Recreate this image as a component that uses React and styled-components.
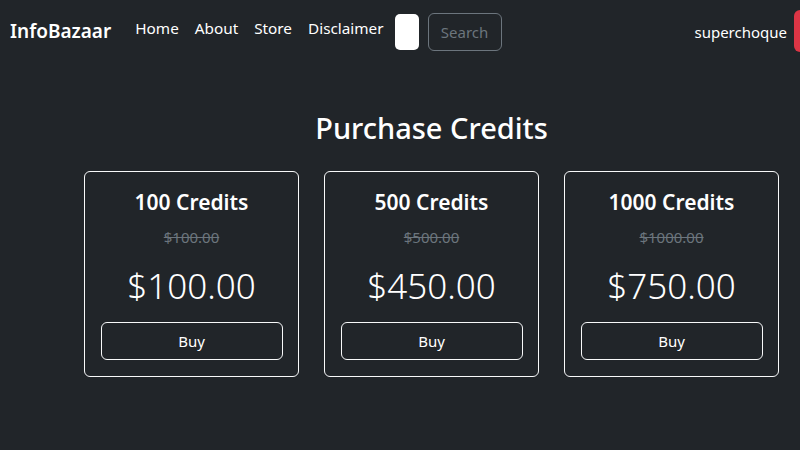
import React from 'react'
import styled, { createGlobalStyle } from 'styled-components'

const GlobalStyle = createGlobalStyle`
  html, body {
    margin: 0;
    background: #212529;
    color: #fff;
    font-family: 'Noto Sans', 'Open Sans', sans-serif;
    overflow: hidden;
  }
`

const Navbar = styled.nav`
  display: flex;
  align-items: center;
  height: 62px;
  padding: 0 0 0 10px;
  box-sizing: border-box;
`

const Brand = styled.a`
  font-size: 19px;
  font-weight: 600;
  color: #fff;
  margin-right: 16px;
  padding-bottom: 1px;
`

const NavList = styled.ul`
  display: flex;
  list-style: none;
  margin: 0 3px 6px 0;
  padding: 0;
`

const NavLink = styled.li`
  font-size: 15.3px;
  color: #fff;
  padding: 0 8px;
`

const SearchForm = styled.form`
  display: flex;
  align-items: center;
  gap: 9px;
  margin-top: 1px;
`

const BlankInput = styled.div`
  width: 24px;
  height: 36px;
  background: #fff;
  border-radius: 5px;
`

const SearchButton = styled.button`
  width: 74px;
  height: 38px;
  background: transparent;
  border: 1px solid #6c757d;
  border-radius: 6px;
  color: #6c757d;
  font-family: inherit;
  font-size: 15px;
`

const Spacer = styled.div`
  flex: 1;
`

const User = styled.span`
  font-size: 15px;
  color: #fff;
  margin-right: 7px;
  margin-top: 2px;
`

const LogoutButton = styled.div`
  width: 6px;
  height: 42px;
  background: #dc3545;
  border-radius: 6px 0 0 6px;
`

const Main = styled.main`
  width: 695px;
  margin: 47px 0 0 84px;
`

const Title = styled.h2`
  margin: 0 0 24px;
  font-size: 29px;
  font-weight: 500;
  line-height: 38px;
  text-align: center;
`

const Cards = styled.div`
  display: flex;
  gap: 25px;
`

const Card = styled.div`
  width: 215px;
  height: 206px;
  box-sizing: border-box;
  border: 1px solid #f8f9fa;
  border-radius: 6px;
  padding: 16px;
  display: flex;
  flex-direction: column;
  align-items: center;
`

const CardTitle = styled.h4`
  margin: 0 0 8px;
  font-size: 21px;
  font-weight: 600;
  line-height: 29px;
`

const OldPrice = styled.p`
  margin: 0 0 13px;
  font-size: 15px;
  line-height: 24px;
  color: #6c757d;
  text-decoration: line-through;
`

const Price = styled.h1`
  margin: 0 0 12px;
  font-size: 35px;
  font-weight: 300;
  line-height: 48px;
`

const BuyButton = styled.button`
  width: 182px;
  height: 38px;
  flex-shrink: 0;
  background: transparent;
  border: 1px solid #f8f9fa;
  border-radius: 6px;
  color: #fff;
  font-family: inherit;
  font-size: 15px;
`

const packs = [
  { credits: 100, old: '$100.00', price: '$100.00' },
  { credits: 500, old: '$500.00', price: '$450.00' },
  { credits: 1000, old: '$1000.00', price: '$750.00' }
]

export default function App () {
  return (
    <>
      <GlobalStyle />
      <Navbar>
        <Brand>InfoBazaar</Brand>
        <NavList>
          <NavLink>Home</NavLink>
          <NavLink>About</NavLink>
          <NavLink>Store</NavLink>
          <NavLink>Disclaimer</NavLink>
        </NavList>
        <SearchForm>
          <BlankInput />
          <SearchButton type='button'>Search</SearchButton>
        </SearchForm>
        <Spacer />
        <User>superchoque</User>
        <LogoutButton />
      </Navbar>
      <Main>
        <Title>Purchase Credits</Title>
        <Cards>
          {packs.map(p => (
            <Card key={p.credits}>
              <CardTitle>{p.credits} Credits</CardTitle>
              <OldPrice>{p.old}</OldPrice>
              <Price>{p.price}</Price>
              <BuyButton type='button'>Buy</BuyButton>
            </Card>
          ))}
        </Cards>
      </Main>
    </>
  )
}
